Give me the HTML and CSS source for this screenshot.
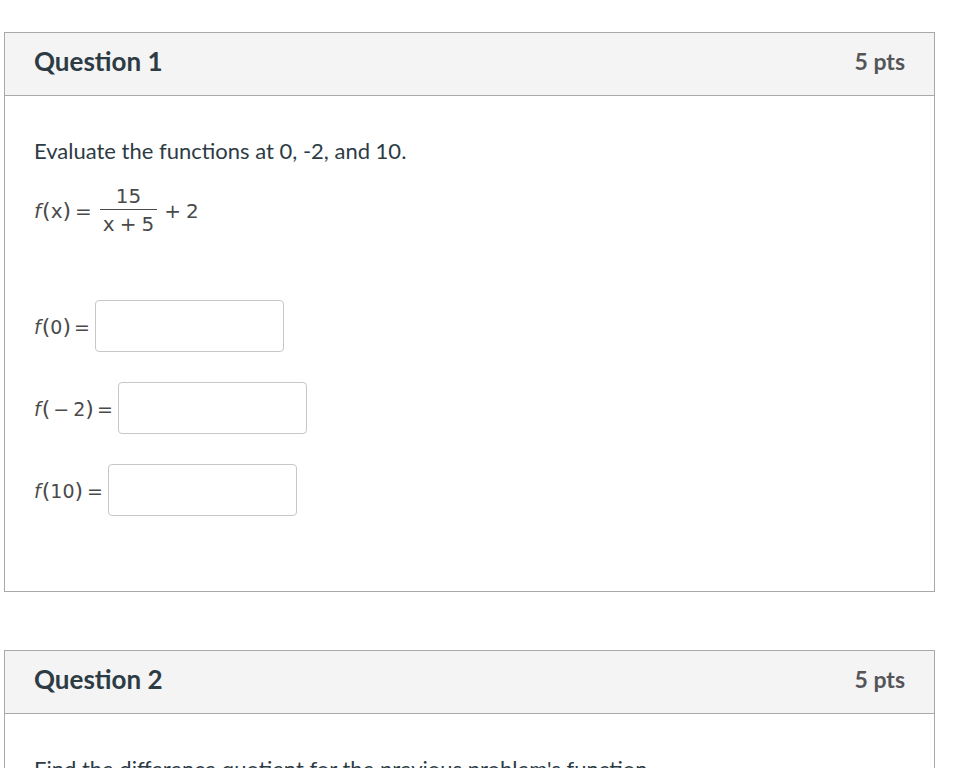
FILE: index.html
```html
<!DOCTYPE html>
<html lang="en">
<head>
<meta charset="utf-8">
<title>Quiz</title>
<link rel="stylesheet" href="styles.css">
</head>
<body>
<div class="page">
  <div class="question">
    <div class="q-header">
      <span class="q-name">Question 1</span>
      <span class="q-pts">5 pts</span>
    </div>
    <div class="q-body q-body-1">
      <p class="q-text">Evaluate the functions at 0, -2, and 10.</p>
      <div class="math formula">
        <span class="fn">f</span><span class="paren">(</span><span class="var">x</span><span class="paren">)</span><span class="op op-eq">=</span>
        <span class="frac"><span class="num">15</span><span class="den"><span class="var">x</span><span class="op">+</span>5</span></span>
        <span class="op">+</span><span>2</span>
      </div>
      <div class="answers">
        <div class="answer">
          <span class="math label"><span class="fn">f</span><span class="paren">(</span>0<span class="paren">)</span><span class="op op-r">=</span></span>
          <input class="answer-box" type="text">
        </div>
        <div class="answer">
          <span class="math label"><span class="fn">f</span><span class="paren">(</span><span class="op op-minus">−</span>2<span class="paren">)</span><span class="op op-r">=</span></span>
          <input class="answer-box" type="text">
        </div>
        <div class="answer">
          <span class="math label"><span class="fn">f</span><span class="paren">(</span>10<span class="paren">)</span><span class="op op-r op-r-wide">=</span></span>
          <input class="answer-box" type="text">
        </div>
      </div>
    </div>
  </div>

  <div class="question">
    <div class="q-header">
      <span class="q-name">Question 2</span>
      <span class="q-pts">5 pts</span>
    </div>
    <div class="q-body">
      <p class="q-text">Find the difference quotient for the previous problem's function.</p>
    </div>
  </div>
</div>
</body>
</html>
```

FILE: styles.css
```css
html, body {
  margin: 0;
  padding: 0;
  background: #ffffff;
}

body {
  font-family: Lato, "Liberation Sans", sans-serif;
  color: #2d3b45;
}

.page {
  padding: 32px 40px 0 4px;
  display: flex;
  flex-direction: column;
  gap: 58px;
}

.question {
  border: 1px solid #a9a9a9;
  background: #ffffff;
}

.q-header {
  box-sizing: border-box;
  height: 63px;
  padding: 13px 29px 0 29px;
  background: #f4f4f4;
  border-bottom: 1px solid #a9a9a9;
  display: flex;
  justify-content: space-between;
  align-items: flex-start;
}

.q-name {
  font-size: 26px;
  font-weight: 700;
  line-height: 31px;
  color: #2d3b45;
}

.q-pts {
  font-size: 23px;
  font-weight: 700;
  line-height: 31px;
  color: #555558;
}

.q-body {
  padding: 41px 29px 0 29px;
}

.q-body-1 {
  height: 454px;
}

.q-text {
  margin: 0;
  font-size: 22px;
  line-height: 28px;
  color: #2d3b45;
}

.math {
  font-family: "DejaVu Sans", "Open Sans", sans-serif;
  font-size: 19px;
  color: #4a4a4a;
}

.fn {
  font-style: italic;
  margin-right: 1px;
}

.paren {
  font-size: 22px;
}

.op {
  margin: 0 3px;
}

.op-minus {
  margin: 0 4px 0 3px;
}

.op-r {
  margin-right: 0;
}

.op-r-wide {
  margin-left: 4px;
}

.formula {
  margin-top: 21px;
  display: flex;
  align-items: center;
  white-space: nowrap;
  font-size: 20px;
}

.formula .op {
  margin: 0 5px;
}

.formula .op-eq {
  margin: 0 4px;
}

.frac {
  display: inline-flex;
  flex-direction: column;
  align-items: center;
  margin: 0 2px 0 4px;
}

.num {
  line-height: 20px;
  padding: 0 4px 3px;
  border-bottom: 1px solid #4a4a4a;
  align-self: stretch;
  text-align: center;
}

.den {
  line-height: 22px;
  padding: 3px 3px 0;
}

.answers {
  margin-top: 65px;
  display: flex;
  flex-direction: column;
  gap: 30px;
}

.answer {
  display: flex;
  align-items: center;
  gap: 5px;
}

.label {
  white-space: nowrap;
}

.answer-box {
  box-sizing: border-box;
  width: 189px;
  height: 52px;
  margin: 0;
  border: 1px solid #c7c7c7;
  border-radius: 4px;
  background: #ffffff;
  padding: 0 8px;
  font: inherit;
}
```
